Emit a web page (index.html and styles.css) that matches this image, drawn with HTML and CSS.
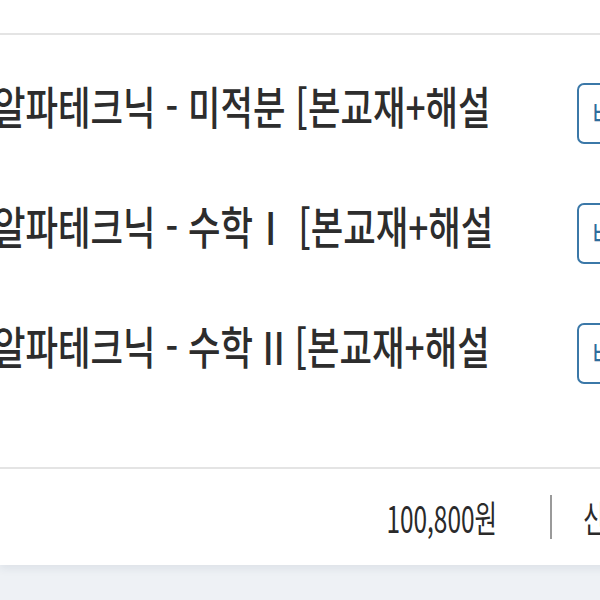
FILE: index.html
```html
<!DOCTYPE html>
<html lang="ko">
<head>
<meta charset="utf-8">
<title>장바구니</title>
<link rel="stylesheet" href="styles.css">
</head>
<body>
<div class="card">
  <div class="card-head"></div>
  <ul class="items">
    <li class="item">
      <div class="item-name"><span class="squeeze">알파테크닉 - 미적분 [본교재+해설</span></div>
      <button class="btn-outline"><span class="squeeze">바로구매</span></button>
    </li>
    <li class="item">
      <div class="item-name"><span class="squeeze">알파테크닉 - 수학Ⅰ [본교재+해설</span></div>
      <button class="btn-outline"><span class="squeeze">바로구매</span></button>
    </li>
    <li class="item">
      <div class="item-name"><span class="squeeze">알파테크닉 - 수학 II [본교재+해설</span></div>
      <button class="btn-outline"><span class="squeeze">바로구매</span></button>
    </li>
  </ul>
  <div class="card-foot">
    <span class="price squeeze">100,800원</span>
    <span class="divider"></span>
    <span class="order squeeze">신청하기</span>
  </div>
</div>
</body>
</html>
```

FILE: styles.css
```css
html, body {
  margin: 0;
  padding: 0;
}

body {
  width: 600px;
  height: 600px;
  overflow: hidden;
  background: #eef1f5;
  font-family: "Noto Sans CJK KR", "Noto Sans", sans-serif;
  color: #333;
}

.card {
  width: 760px;
  background: #fff;
  box-shadow: 0 4px 8px rgba(40, 60, 90, 0.08);
}

.card-head {
  height: 33px;
  border-bottom: 2px solid #e4e4e4;
}

.items {
  list-style: none;
  margin: 0;
  padding: 0 0 72px;
}

.item {
  display: grid;
  grid-template-columns: 577px 120px;
  align-items: start;
  height: 120px;
  padding-top: 48px;
  box-sizing: border-box;
}

.squeeze {
  display: inline-block;
  white-space: nowrap;
  transform: scaleX(0.785);
  transform-origin: left center;
}

.item-name {
  margin-left: -7px;
  margin-top: -2px;
  font-size: 45px;
  font-weight: 500;
  line-height: 50px;
  white-space: nowrap;
  color: #2d2d2d;
}

.btn-outline {
  width: 110px;
  height: 61px;
  padding: 0 0 0 14px;
  border: 2px solid #3b78a8;
  border-radius: 7px;
  background: #fff;
  color: #2f6c9c;
  font-family: inherit;
  font-size: 27px;
  font-weight: 500;
  text-align: left;
}

.btn-outline .squeeze {
  transform: scaleX(0.7);
}

.card-foot {
  display: flex;
  align-items: center;
  height: 96px;
  border-top: 2px solid #e4e4e4;
}

.card-foot .squeeze {
  transform: scaleX(0.66);
}

.price {
  width: 497px;
  text-align: right;
  font-size: 37px;
  font-weight: 400;
  color: #2a2a2a;
}

.card-foot .price {
  transform-origin: right center;
}

.divider {
  width: 2px;
  height: 44px;
  margin-left: 53px;
  background: #9a9a9a;
}

.order {
  margin-left: 31px;
  font-size: 37px;
  font-weight: 400;
  color: #2a2a2a;
}
```
